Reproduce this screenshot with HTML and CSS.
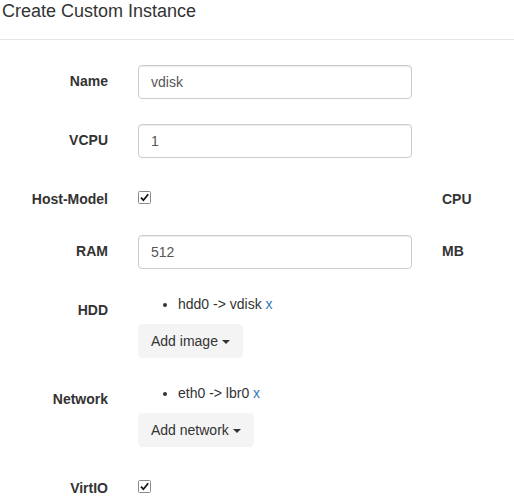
FILE: index.html
```html
<!DOCTYPE html>
<html>
<head>
<meta charset="utf-8">
<link rel="stylesheet" href="styles.css">
</head>
<body>
<div class="modal">
  <div class="modal-header">
    <h4 class="modal-title">Create Custom Instance</h4>
  </div>
  <form class="modal-body">
    <div class="form-row">
      <label class="control-label">Name</label>
      <div class="field"><input class="form-control" type="text" value="vdisk"></div>
    </div>
    <div class="form-row">
      <label class="control-label">VCPU</label>
      <div class="field"><input class="form-control" type="text" value="1"></div>
    </div>
    <div class="form-row">
      <label class="control-label">Host-Model</label>
      <div class="field"><span class="check"><svg viewBox="0 0 13 13" width="13" height="13"><rect x="0.5" y="0.5" width="12" height="12" rx="1" fill="#fff" stroke="#8a8a8a"/><path d="M3 6.6 L5.4 9.2 L10.2 3.2" fill="none" stroke="#111" stroke-width="1.7"/></svg></span></div>
      <label class="unit-label">CPU</label>
    </div>
    <div class="form-row">
      <label class="control-label">RAM</label>
      <div class="field"><input class="form-control" type="text" value="512"></div>
      <label class="unit-label">MB</label>
    </div>
    <div class="form-row">
      <label class="control-label">HDD</label>
      <div class="field">
        <ul class="items"><li>hdd0 -&gt; vdisk <a href="#">x</a></li></ul>
        <button type="button" class="btn">Add image <span class="caret"></span></button>
      </div>
    </div>
    <div class="form-row">
      <label class="control-label">Network</label>
      <div class="field">
        <ul class="items"><li>eth0 -&gt; lbr0 <a href="#">x</a></li></ul>
        <button type="button" class="btn">Add network <span class="caret"></span></button>
      </div>
    </div>
    <div class="form-row">
      <label class="control-label">VirtIO</label>
      <div class="field"><span class="check"><svg viewBox="0 0 13 13" width="13" height="13"><rect x="0.5" y="0.5" width="12" height="12" rx="1" fill="#fff" stroke="#8a8a8a"/><path d="M3 6.6 L5.4 9.2 L10.2 3.2" fill="none" stroke="#111" stroke-width="1.7"/></svg></span></div>
    </div>
  </form>
</div>
</body>
</html>
```

FILE: styles.css
```css
* { box-sizing: border-box; }

html, body {
  margin: 0;
  background: #fff;
}

body {
  font-family: "Liberation Sans", Arial, sans-serif;
  font-size: 14px;
  line-height: 20px;
  color: #333;
  overflow: hidden;
}

.modal-header {
  height: 40px;
  padding: 1px 2px 0;
  border-bottom: 1px solid #e5e5e5;
}

.modal-title {
  margin: 0;
  font-size: 18px;
  font-weight: normal;
  line-height: 20px;
}

.modal-body {
  margin: 0;
  padding-top: 25px;
}

.form-row {
  display: flex;
  align-items: flex-start;
  margin-bottom: 25px;
}

.control-label {
  width: 108px;
  flex: none;
  padding: 6px 0 1px;
  text-align: right;
  font-weight: bold;
}

.field {
  width: 274px;
  flex: none;
  margin-left: 30px;
}

.unit-label {
  margin-left: 30px;
  padding: 6px 0 1px;
  font-weight: bold;
}

.form-control {
  display: block;
  width: 100%;
  height: 34px;
  padding: 6px 12px;
  font-family: inherit;
  font-size: 14px;
  line-height: 20px;
  color: #555;
  background: #fff;
  border: 1px solid #ccc;
  border-radius: 4px;
  box-shadow: inset 0 1px 1px rgba(0, 0, 0, .075);
}

.check {
  display: block;
  width: 13px;
  height: 13px;
  margin-top: 8px;
}

.check svg { display: block; }

.items {
  margin: 0 0 10px;
  padding-left: 40px;
}

.items a {
  color: #337ab7;
  text-decoration: none;
}

.btn {
  display: inline-block;
  height: 34px;
  padding: 6px 12px;
  font-family: inherit;
  font-size: 14px;
  line-height: 20px;
  color: #333;
  background: #f4f4f4;
  border: 1px solid #f4f4f4;
  border-radius: 4px;
}

.caret {
  display: inline-block;
  width: 0;
  height: 0;
  margin-left: 0;
  vertical-align: middle;
  border-top: 4px solid #333;
  border-left: 4px solid transparent;
  border-right: 4px solid transparent;
}
```
